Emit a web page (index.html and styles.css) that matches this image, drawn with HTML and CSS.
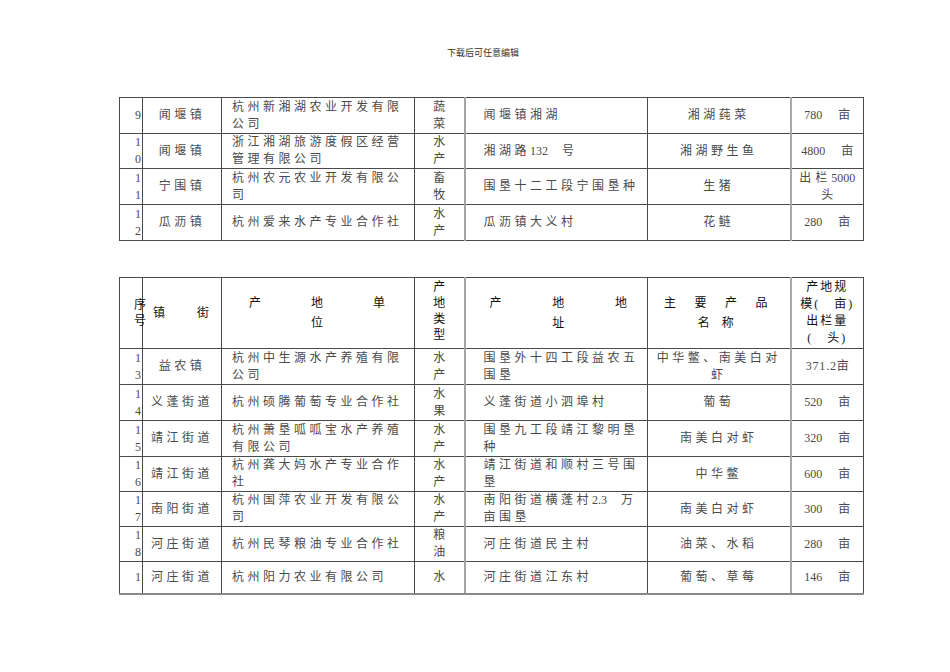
FILE: index.html
```html
<!DOCTYPE html>
<html lang="zh-CN">
<head>
<meta charset="utf-8">
<title>下载后可任意编辑</title>
<link rel="stylesheet" href="styles.css">
</head>
<body>
<div class="page">
  <div class="note">下载后可任意编辑</div>

  <table class="grid first">
    <colgroup>
      <col class="c-seq"><col class="c-town"><col class="c-co"><col class="c-type"><col class="c-addr"><col class="c-prod"><col class="c-scale">
    </colgroup>
    <tbody>
      <tr class="r36">
        <td class="seq">9</td>
        <td class="town">闻堰镇</td>
        <td class="co">杭州新湘湖农业开发有限<br>公司</td>
        <td class="type">蔬<br>菜</td>
        <td class="addr">闻堰镇湘湖</td>
        <td class="prod">湘湖莼菜</td>
        <td class="scale"><span class="num">780</span><span class="unit">亩</span></td>
      </tr>
      <tr class="r35">
        <td class="seq">1<br>0</td>
        <td class="town">闻堰镇</td>
        <td class="co">浙江湘湖旅游度假区经营<br>管理有限公司</td>
        <td class="type">水<br>产</td>
        <td class="addr">湘湖路<span class="num">132</span><span class="gap"></span>号</td>
        <td class="prod">湘湖野生鱼</td>
        <td class="scale"><span class="num">4800</span><span class="unit">亩</span></td>
      </tr>
      <tr class="r36">
        <td class="seq">1<br>1</td>
        <td class="town">宁围镇</td>
        <td class="co">杭州农元农业开发有限公<br>司</td>
        <td class="type">畜<br>牧</td>
        <td class="addr">围垦十二工段宁围垦种</td>
        <td class="prod">生猪</td>
        <td class="scale"><span class="spaced">出栏</span><span class="num">5000</span><br>头</td>
      </tr>
      <tr class="r36">
        <td class="seq">1<br>2</td>
        <td class="town">瓜沥镇</td>
        <td class="co">杭州爱来水产专业合作社</td>
        <td class="type">水<br>产</td>
        <td class="addr">瓜沥镇大义村</td>
        <td class="prod">花鲢</td>
        <td class="scale"><span class="num">280</span><span class="unit">亩</span></td>
      </tr>
    </tbody>
  </table>

  <table class="grid second">
    <colgroup>
      <col class="c-seq"><col class="c-town"><col class="c-co"><col class="c-type"><col class="c-addr"><col class="c-prod"><col class="c-scale">
    </colgroup>
    <thead>
      <tr class="head">
        <th class="seq"><span class="spill">序<br>号</span></th>
        <th class="h-town"><span class="spread"><span>镇</span><span>街</span></span></th>
        <th class="h-co"><span class="spread"><span>产</span><span>地</span><span>单</span></span><span class="second-line">位</span></th>
        <th class="h-type">产<br>地<br>类<br>型</th>
        <th class="h-addr"><span class="spread"><span>产</span><span>地</span><span>地</span></span><span class="second-line">址</span></th>
        <th class="h-prod"><span class="spread"><span>主</span><span>要</span><span>产</span><span>品</span></span><span class="second-line">名　称</span></th>
        <th class="h-scale">产地规<br>模(　亩)<br>出栏量<br>(　头)</th>
      </tr>
    </thead>
    <tbody>
      <tr class="r36">
        <td class="seq">1<br>3</td>
        <td class="town">益农镇</td>
        <td class="co">杭州中生源水产养殖有限<br>公司</td>
        <td class="type">水<br>产</td>
        <td class="addr">围垦外十四工段益农五<br>围垦</td>
        <td class="prod">中华鳖、南美白对<br>虾</td>
        <td class="scale"><span class="num dec">371.2</span>亩</td>
      </tr>
      <tr class="r36">
        <td class="seq">1<br>4</td>
        <td class="town">义蓬街道</td>
        <td class="co">杭州硕腾葡萄专业合作社</td>
        <td class="type">水<br>果</td>
        <td class="addr">义蓬街道小泗埠村</td>
        <td class="prod">葡萄</td>
        <td class="scale"><span class="num">520</span><span class="unit">亩</span></td>
      </tr>
      <tr class="r36">
        <td class="seq">1<br>5</td>
        <td class="town">靖江街道</td>
        <td class="co">杭州萧垦呱呱宝水产养殖<br>有限公司</td>
        <td class="type">水<br>产</td>
        <td class="addr">围垦九工段靖江黎明垦<br>种</td>
        <td class="prod">南美白对虾</td>
        <td class="scale"><span class="num">320</span><span class="unit">亩</span></td>
      </tr>
      <tr class="r35">
        <td class="seq">1<br>6</td>
        <td class="town">靖江街道</td>
        <td class="co">杭州龚大妈水产专业合作<br>社</td>
        <td class="type">水<br>产</td>
        <td class="addr">靖江街道和顺村三号围<br>垦</td>
        <td class="prod">中华鳖</td>
        <td class="scale"><span class="num">600</span><span class="unit">亩</span></td>
      </tr>
      <tr class="r35">
        <td class="seq">1<br>7</td>
        <td class="town">南阳街道</td>
        <td class="co">杭州国萍农业开发有限公<br>司</td>
        <td class="type">水<br>产</td>
        <td class="addr">南阳街道横蓬村<span class="num">2.3</span><span class="gap"></span>万<br>亩围垦</td>
        <td class="prod">南美白对虾</td>
        <td class="scale"><span class="num">300</span><span class="unit">亩</span></td>
      </tr>
      <tr class="r34">
        <td class="seq">1<br>8</td>
        <td class="town">河庄街道</td>
        <td class="co">杭州民琴粮油专业合作社</td>
        <td class="type">粮<br>油</td>
        <td class="addr">河庄街道民主村</td>
        <td class="prod">油菜、水稻</td>
        <td class="scale"><span class="num">280</span><span class="unit">亩</span></td>
      </tr>
      <tr class="r32">
        <td class="seq">1</td>
        <td class="town">河庄街道</td>
        <td class="co">杭州阳力农业有限公司</td>
        <td class="type">水</td>
        <td class="addr">河庄街道江东村</td>
        <td class="prod">葡萄、草莓</td>
        <td class="scale"><span class="num">146</span><span class="unit">亩</span></td>
      </tr>
    </tbody>
  </table>
</div>
</body>
</html>
```

FILE: styles.css
```css
html, body {
  margin: 0;
  padding: 0;
  background: #ffffff;
}

body {
  font-family: "Liberation Serif", "Noto Sans CJK SC", serif;
  color: #4a4a4a;
}

.page {
  width: 950px;
  padding-top: 47px;
}

.note {
  text-align: center;
  padding-left: 16px;
  font-family: "Noto Sans CJK SC", sans-serif;
  font-size: 9px;
  line-height: 12px;
  color: #333;
  margin-bottom: 38px;
}

.grid {
  margin-left: 119px;
  width: 745px;
  table-layout: fixed;
  border-collapse: collapse;
  font-size: 12px;
  line-height: 17px;
  letter-spacing: 3.5px;
}

.grid.second {
  margin-top: 36px;
}

.c-seq { width: 23px; }
.c-town { width: 79px; }
.c-co { width: 193px; }
.c-type { width: 50px; }
.c-addr { width: 183px; }
.c-prod { width: 143px; }
.c-scale { width: 73px; }

.grid td,
.grid th {
  border: 1px solid #4a4a4a;
  padding: 0;
  vertical-align: middle;
  white-space: nowrap;
  overflow: visible;
}

.grid td.addr,
.grid th.h-addr {
  border-left: 2px solid #a3a3a3;
}

.grid td.scale,
.grid th.h-scale {
  border-left: 2px solid #a8a8a8;
}

.grid.second tbody tr:last-child td {
  border-bottom: 2px solid #8a8a8a;
}

.r36 { height: 36px; }
.r35 { height: 35px; }
.r34 { height: 34px; }
.r32 { height: 32px; }

.seq {
  text-align: right;
  padding-right: 1px !important;
  letter-spacing: 0;
  font-size: 12px;
}

.town {
  text-align: center;
}

.co {
  text-align: left;
  padding-left: 10px !important;
}

.type {
  text-align: center;
  letter-spacing: 0;
}

.addr {
  text-align: left;
  padding-left: 18px !important;
}

.prod {
  text-align: center;
}

.scale {
  text-align: center;
  letter-spacing: 0;
}

.num {
  letter-spacing: 0;
}

.num.dec {
  letter-spacing: 0.8px;
}

.spaced {
  letter-spacing: 4px;
}

.unit {
  margin-left: 16px;
}

.gap {
  display: inline-block;
  width: 14px;
}

/* header row of the second table */
.head {
  height: 71px;
}

.head th {
  font-weight: normal;
  color: #111;
  letter-spacing: 0;
}

.spill {
  display: inline-block;
  margin-right: -5px;
  line-height: 16px;
  text-align: left;
}

.spread {
  display: flex;
  justify-content: space-between;
}

.second-line {
  display: block;
  text-align: center;
}

.h-town {
  padding: 0 12px 0 10px !important;
}

.h-co {
  padding: 0 29px 0 27px !important;
  line-height: 20px;
}

.h-type {
  text-align: center;
  line-height: 16px;
  padding-bottom: 4px !important;
}

.h-addr {
  padding: 0 20px 0 24px !important;
  line-height: 20px;
}

.h-prod {
  padding: 0 22px 0 16px !important;
  line-height: 20px;
}

.h-scale {
  text-align: center;
  line-height: 17px;
  letter-spacing: 2px !important;
}
```
